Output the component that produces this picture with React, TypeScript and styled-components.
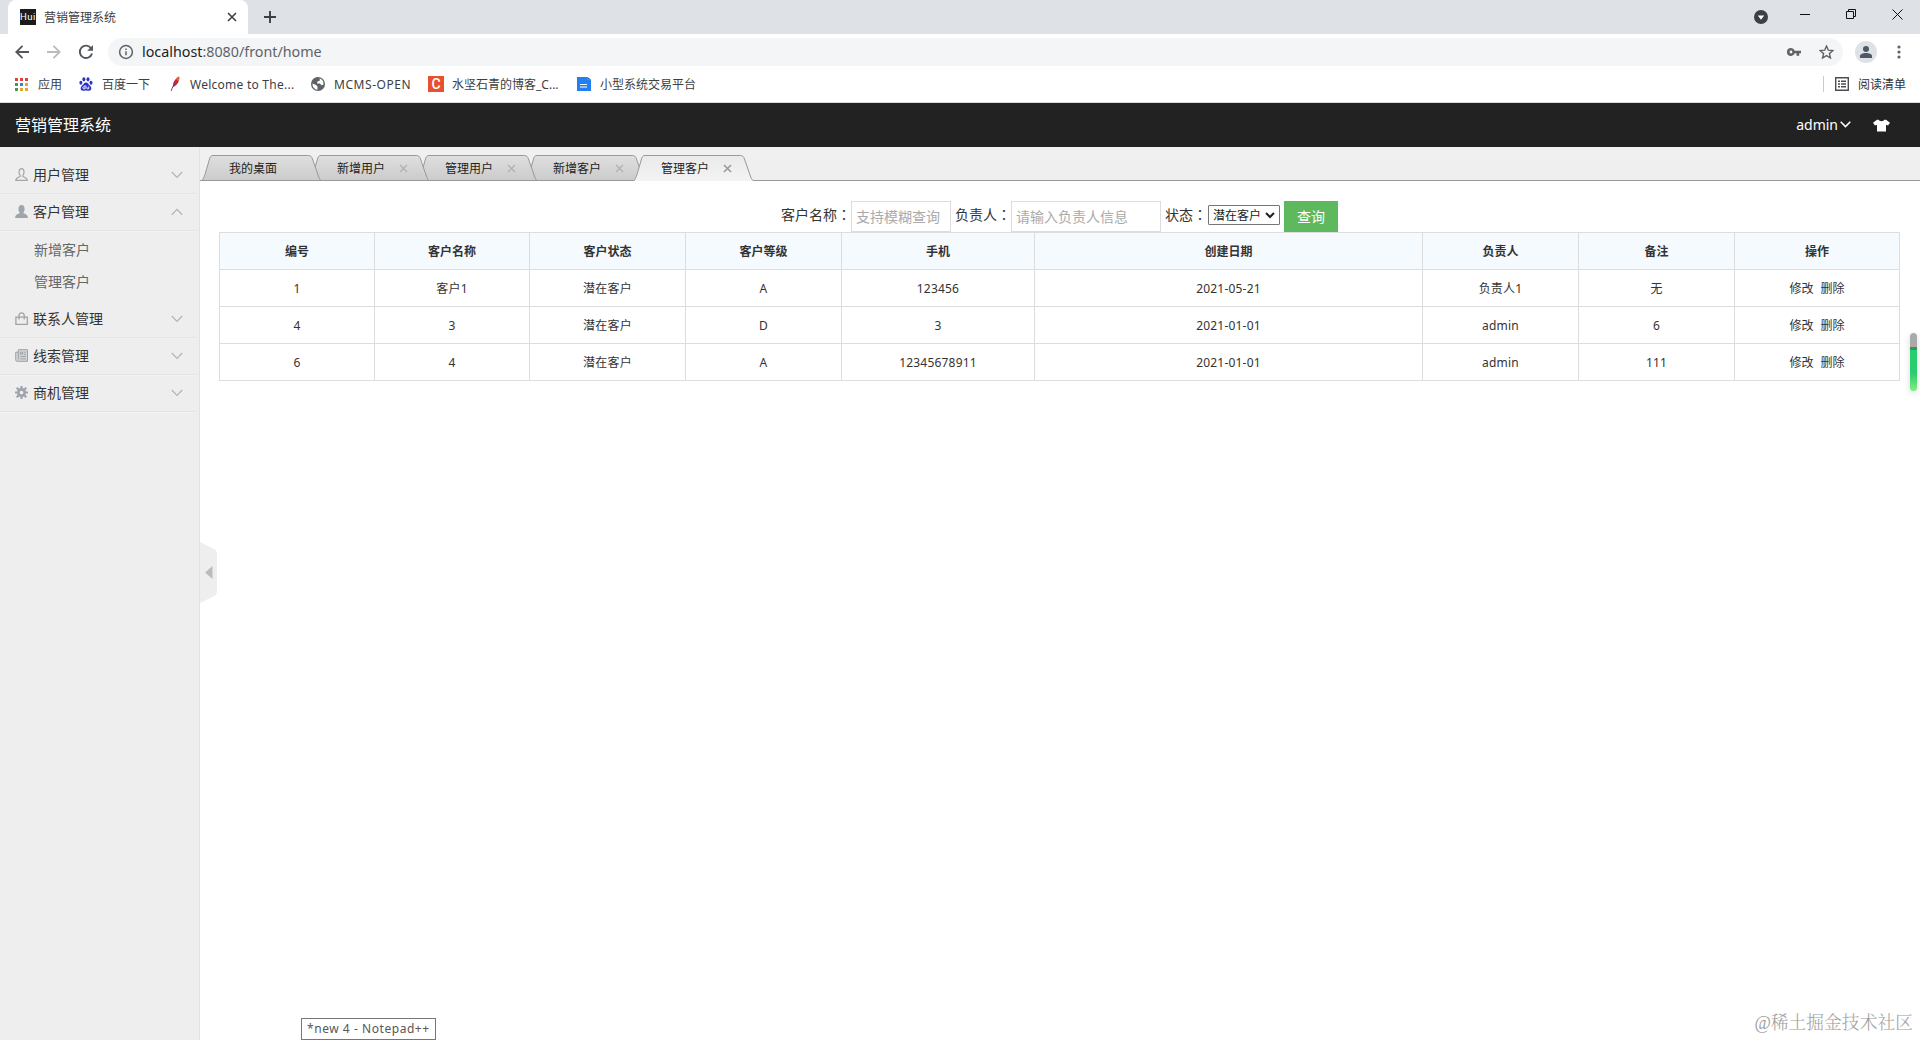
import React from "react";
import styled, { createGlobalStyle } from "styled-components";

const UI = `"Noto Sans", "Noto Sans CJK SC", sans-serif`;
const CJK = `"Noto Sans CJK SC", sans-serif`;

const GlobalStyle = createGlobalStyle`
  * { box-sizing: border-box; }
  html, body { margin: 0; padding: 0; }
  body { font-family: ${UI}; font-size: 12px; color: #333; background: #fff; overflow: hidden; }
  svg { display: block; flex: none; }
`;

const Window = styled.div`
  position: relative;
  width: 1920px;
  height: 1040px;
  display: flex;
  flex-direction: column;
  overflow: hidden;
`;

/* ---------- browser chrome ---------- */
const TabStrip = styled.div`
  height: 34px;
  background: #dee1e6;
  display: flex;
  align-items: flex-end;
  padding-left: 8px;
`;
const BrowserTab = styled.div`
  width: 240px;
  height: 34px;
  background: #fff;
  border-radius: 8px 8px 0 0;
  display: flex;
  align-items: center;
  padding: 0 11px 0 12px;
`;
const Favicon = styled.div`
  width: 16px;
  height: 16px;
  background: #1b1b1b;
  color: #fff;
  font: 9.5px/16px "Roboto", sans-serif;
  text-align: center;
  letter-spacing: 0.5px;
`;
const TabTitle = styled.div`
  flex: 1;
  margin-left: 8px;
  font: 12px/34px ${CJK};
  color: #3c4043;
`;
const NewTab = styled.div`
  height: 34px;
  width: 44px;
  display: flex;
  align-items: center;
  justify-content: center;
`;
const WindowButtons = styled.div`
  height: 34px;
  margin-left: auto;
  display: flex;
  align-items: flex-start;
  padding-right: 17px;
`;
const WindowButton = styled.div<{ $w: number; $top: number; $gap: number }>`
  width: ${(p) => p.$w}px;
  margin: ${(p) => p.$top}px ${(p) => p.$gap}px 0 0;
`;
const Toolbar = styled.div`
  height: 36px;
  display: flex;
  align-items: center;
  padding-left: 10px;
  background: #fff;
`;
const NavButton = styled.div<{ $w: number }>`
  width: ${(p) => p.$w}px;
  display: flex;
  justify-content: center;
`;
const Omnibox = styled.div`
  width: 1735px;
  height: 28px;
  border-radius: 14px;
  background: #f3f5f6;
  display: flex;
  align-items: center;
  padding: 0 9px 0 10px;
`;
const Url = styled.div`
  flex: 1;
  margin: -1px 0 0 8px;
  font: 14.3px/28px "Noto Sans", sans-serif;
  color: #5f6368;
  b { font-weight: 400; color: #202124; }
`;
const OmniIcons = styled.div`
  display: flex;
  gap: 18px;
  align-items: center;
`;
const Avatar = styled.div`
  margin-left: 12px;
  width: 22px;
  height: 22px;
  border-radius: 50%;
  background: #dee1e6;
  display: flex;
  align-items: center;
  justify-content: center;
`;
const Menu = styled.div`
  margin-left: 20px;
`;
const Bookmarks = styled.div`
  height: 33px;
  display: flex;
  align-items: flex-start;
  padding: 4px 14px 0 15px;
  border-bottom: 1px solid #dcdcdc;
`;
const Bookmark = styled.div<{ $w: number; $icon: number }>`
  width: ${(p) => p.$w}px;
  height: 20px;
  display: flex;
  align-items: center;
  white-space: nowrap;
  font-size: 12px;
  line-height: 20px;
  color: #3c4043;
  > span:first-child { width: ${(p) => p.$icon}px; display: flex; }
  > span:last-child { padding-top: 1px; }
`;
const LatinLabel = styled.span<{ $ls?: number }>`
  letter-spacing: ${(p) => p.$ls ?? 0}px;
`;
const RedC = styled.i`
  width: 16px;
  height: 16px;
  background: #e8502f;
  color: #fff;
  font: 500 14px/16px "Roboto", sans-serif;
  text-align: center;
`;
const ReadingList = styled.div`
  margin: 2px 0 0 auto;
  height: 16px;
  display: flex;
  align-items: center;
  gap: 9px;
  padding-left: 11px;
  border-left: 1px solid #c8cacd;
  color: #303236;
  line-height: 16px;
  > span { padding-top: 1px; }
`;

/* ---------- application ---------- */
const Header = styled.header`
  height: 44px;
  background: #222;
  color: #fff;
  display: flex;
  align-items: center;
  padding: 0 30px 0 15px;
`;
const Brand = styled.div`
  flex: 1;
  font: 16px/42px ${CJK};
  padding-bottom: 2px;
`;
const UserName = styled.div`
  font-size: 14px;
  line-height: 42px;
  display: flex;
  align-items: center;
  gap: 2px;
  margin-right: 22px;
  svg { margin-top: -1px; }
`;
const Body = styled.div`
  flex: 1;
  display: flex;
  min-height: 0;
`;
const Sidebar = styled.aside`
  width: 200px;
  background: #eee;
  border-right: 1px solid #e2e2e2;
  padding-top: 10px;
`;
const MenuHead = styled.div`
  height: 37px;
  width: 197px;
  display: flex;
  align-items: center;
  padding: 0 14px 1px 15px;
  border-bottom: 1px solid #e4e4e4;
  box-shadow: 0 1px 0 #f2f2f2;
  font: 14px/34px ${CJK};
  color: #333;
  > span { flex: 1; margin-left: 4px; padding-bottom: 1px; }
`;
const SubMenu = styled.div`
  padding: 3px 0;
`;
const SubItem = styled.div`
  height: 32px;
  padding-left: 34px;
  font: 14px/30px ${CJK};
  color: #666;
`;
const Main = styled.main`
  flex: 1;
  position: relative;
  background: #fff;
`;
const PageTabs = styled.div`
  height: 34px;
  background: linear-gradient(#f1f1f1, #eee);
  border-bottom: 1px solid #999;
  padding: 8px 0 0 1px;
  display: flex;
`;
const PageTab = styled.div<{ $z: number }>`
  position: relative;
  z-index: ${(p) => p.$z};
  width: 108px;
  height: 26px;
  display: flex;
  align-items: center;
  padding: 0 0 1px 28px;
  font: 12px/24px ${CJK};
  color: #222;
  > span { position: relative; width: 62px; }
`;
const TabShape = styled.svg`
  position: absolute;
  left: 0;
  top: 0;
`;
const CloseMark = styled.svg`
  position: relative;
  margin-top: 1px;
`;
const SearchForm = styled.div`
  height: 51px;
  padding: 20px 0 0 581px;
  display: flex;
  align-items: flex-start;
`;
const Label = styled.label<{ $w: number }>`
  width: ${(p) => p.$w}px;
  font: 14px/26px ${CJK};
  white-space: nowrap;
  i { font-style: normal; font-family: "Noto Sans CJK TC", sans-serif; }
`;
const TextField = styled.input<{ $w: number }>`
  width: ${(p) => p.$w}px;
  height: 31px;
  margin-right: 4px;
  padding: 0 4px 1px;
  border: 1px solid #ddd;
  outline: none;
  font: 14px ${CJK};
  &::placeholder { color: #aaa; opacity: 1; }
`;
const SelectBox = styled.div`
  width: 72px;
  height: 20px;
  margin: 4px 4px 0 0;
  padding: 0 4px;
  border: 1px solid #767676;
  border-radius: 1px;
  display: flex;
  align-items: center;
  justify-content: space-between;
  font: 12px/18px ${CJK};
  color: #222;
`;
const SearchButton = styled.button`
  width: 54px;
  height: 31px;
  border: 0;
  padding: 0;
  background: #5eb95e;
  color: #fff;
  font: 14px/29px ${CJK};
`;
const Table = styled.table`
  margin-left: 19px;
  width: 1681px;
  table-layout: fixed;
  border-spacing: 0;
  border-top: 1px solid #ddd;
  border-left: 1px solid #ddd;
  text-align: center;
`;
const Th = styled.th`
  height: 37px;
  padding: 0;
  background: #f5fafe;
  border-right: 1px solid #ddd;
  border-bottom: 1px solid #ddd;
  font: 700 12px/36px ${CJK};
`;
const Td = styled.td`
  height: 37px;
  padding: 1px 0 0;
  border-right: 1px solid #ddd;
  border-bottom: 1px solid #ddd;
  font: 12px/35px ${UI};
  letter-spacing: 0.2px;
`;
const Action = styled.a`
  letter-spacing: 0;
  & + & { margin-left: 7px; }
`;

/* ---------- overlays ---------- */
const Handle = styled.svg`
  position: absolute;
  left: 0;
  top: 395px;
`;
const Meter = styled.div`
  position: absolute;
  left: 1910px;
  top: 333px;
  width: 7px;
  height: 58px;
  border-radius: 4px;
  background: linear-gradient(#aaa 0 14px, #2a9a5c 14px 17px, #29cc6f 17px 40px, #7fee7f);
  box-shadow: 0 2px 6px rgba(0, 0, 0, 0.15);
`;
const TaskTip = styled.div`
  position: absolute;
  left: 301px;
  top: 1018px;
  width: 135px;
  height: 22px;
  border: 1px solid #767676;
  background: #fff;
  padding-left: 5px;
  font-size: 12px;
  line-height: 20px;
  letter-spacing: 0.55px;
  color: #575757;
  white-space: nowrap;
`;
const Watermark = styled.div`
  position: absolute;
  right: 7px;
  top: 1010px;
  font: 300 17.8px/26px "Liberation Serif", "Noto Serif CJK SC", "Noto Sans CJK SC", serif;
  color: #a0a0a0;
  white-space: nowrap;
`;

const Chevron = ({ up }: { up?: boolean }) => (
  <svg width="12" height="8" viewBox="0 0 12 8" fill="none" stroke="#b5b5b5" strokeWidth="1.3">
    <path d={up ? "M.8 6.8 6 1.4l5.200 5.400" : "M.8 1 6 6.400 11.200 1"} />
  </svg>
);

const UserShape = "M4 4.200C4 1.900 5 .7 6.500 .7S9 1.900 9 4.200c0 1.600-.6 2.500-1.200 3.200v1c.6.8 4.200.9 4.400 3.900H.8C1 9.300 4.600 9.200 5.200 8.400v-1C4.600 6.700 4 5.800 4 4.200z";

const icons: Record<string, React.ReactNode> = {
  user: <path d={UserShape} fill="none" stroke="#a5a5a5" strokeWidth="1.200" />,
  client: <path d={UserShape} fill="#9fa5ac" stroke="#9fa5ac" strokeWidth="1.200" />,
  bag: (
    <g fill="none" stroke="#a2a2a2" strokeWidth="1.300">
      <path d="M.9 5.100h11.400v7.200H.9zM4 7.500V3.500C4 .1 9.200 .1 9.200 3.500v4" />
    </g>
  ),
  news: (
    <g fill="none" stroke="#9ea2a6">
      <path d="M3.300 .7h9.200v11.600H2.200A1.600 1.600 0 0 1 .7 10.800V3.200h2.600z" fill="#d3d5d8" stroke="none" />
      <path d="M3.300 10.500V.7h9.200v11.600H2.200A1.500 1.500 0 0 1 .7 10.800V3.200h2.600" />
      <path d="M5.300 3.200h2.200v2H5.300zM8.700 3.200h2.300M8.700 5.400h2.300M5.300 7.600h5.700M5.300 9.900h5.700" />
    </g>
  ),
  gear: (
    <g stroke="#9ea4aa" fill="none">
      <circle cx="6.500" cy="6.500" r="3.200" strokeWidth="2.700" />
      <path d="M6.500 0v3M6.500 10v3M0 6.500h3M10 6.500h3M1.700 1.700 4 4M9 9l2.300 2.300M11.300 1.700 9 4M4 9l-2.300 2.300" strokeWidth="2.200" />
    </g>
  ),
};

const menu = [
  { icon: "user", title: "用户管理" },
  { icon: "client", title: "客户管理", items: ["新增客户", "管理客户"] },
  { icon: "bag", title: "联系人管理" },
  { icon: "news", title: "线索管理" },
  { icon: "gear", title: "商机管理" },
];
const pageTabs = ["我的桌面", "新增用户", "管理用户", "新增客户", "管理客户"];
const columnWidths = [155, 155, 156, 156, 193, 388, 156, 156, 165];
const headings = ["编号", "客户名称", "客户状态", "客户等级", "手机", "创建日期", "负责人", "备注"];
const rows = [
  ["1", "客户1", "潜在客户", "A", "123456", "2021-05-21", "负责人1", "无"],
  ["4", "3", "潜在客户", "D", "3", "2021-01-01", "admin", "6"],
  ["6", "4", "潜在客户", "A", "12345678911", "2021-01-01", "admin", "111"],
];
const appColors = ["#d9453d", "#d9453d", "#d9453d", "#3f9a55", "#3f7fd0", "#e3a72c", "#3f9a55", "#e3a72c", "#e3a72c"];

const Browser = () => (
  <>
    <TabStrip>
      <BrowserTab>
        <Favicon>Hui</Favicon>
        <TabTitle>营销管理系统</TabTitle>
        <svg width="10" height="10" stroke="#3c4043" strokeWidth="1.600"><path d="M1 1l8 8M9 1 1 9" /></svg>
      </BrowserTab>
      <NewTab>
        <svg width="12" height="12" stroke="#3c4043" strokeWidth="1.900"><path d="M6 0v12M0 6h12" /></svg>
      </NewTab>
      <WindowButtons>
        <WindowButton $w={14} $top={10} $gap={32}>
          <svg width="14" height="14"><circle cx="7" cy="7" r="7" fill="#3c4043" /><path d="M3.800 5.500h6.400L7 9.700z" fill="#fff" /></svg>
        </WindowButton>
        <WindowButton $w={10} $top={9} $gap={36}>
          <svg width="10" height="10" stroke="#111"><path d="M0 5.500h10" /></svg>
        </WindowButton>
        <WindowButton $w={10} $top={9} $gap={36}>
          <svg width="10" height="10" stroke="#111" fill="none"><path d="M.5 2.500h7v7h-7zM2.500 2.500v-2h7v7h-2" /></svg>
        </WindowButton>
        <WindowButton $w={11} $top={9} $gap={0}>
          <svg width="11" height="11" stroke="#111"><path d="M.5 .5l10 10M10.500 .5l-10 10" /></svg>
        </WindowButton>
      </WindowButtons>
    </TabStrip>
    <Toolbar>
      <NavButton $w={24}>
        <svg width="14" height="14" fill="none" stroke="#54585c" strokeWidth="1.900"><path d="M14 7H1.500M7.500 .8 1.300 7l6.200 6.200" /></svg>
      </NavButton>
      <NavButton $w={40}>
        <svg width="14" height="14" fill="none" stroke="#babcbe" strokeWidth="1.900"><path d="M0 7h12.500M6.500 .8 12.700 7l-6.200 6.200" /></svg>
      </NavButton>
      <NavButton $w={24}>
        <svg width="16" height="16" fill="none" stroke="#54585c" strokeWidth="1.900"><path d="M13.200 4.400A6.200 6.200 0 1 0 14 9.400" /><path d="M15 1v5.800H9.200z" fill="#54585c" stroke="none" /></svg>
      </NavButton>
      <NavButton $w={10} />
      <Omnibox>
        <svg width="16" height="16" fill="none" stroke="#5f6368" strokeWidth="1.500"><circle cx="8" cy="8" r="6.400" /><path d="M8 7.200v4M8 4.400v1.600" /></svg>
        <Url><b>localhost</b>:8080/front/home</Url>
        <OmniIcons>
          <svg width="14" height="10" fill="#5f6368"><path fillRule="evenodd" d="M4 1a4 4 0 1 0 3.700 5.300H9.500v2.500h2.700V6.300H14V3.700H7.700A4 4 0 0 0 4 1zm0 2.600a1.400 1.400 0 1 1 0 2.800 1.400 1.400 0 0 1 0-2.800z" /></svg>
          <svg width="15" height="14" viewBox="0 0 15 14" fill="none" stroke="#5f6368" strokeWidth="1.400"><path d="M7.500 1l1.800 4.200 4.600.4-3.500 3 1.100 4.400-4-2.400-4 2.400 1.100-4.400-3.500-3 4.600-.4z" /></svg>
        </OmniIcons>
      </Omnibox>
      <Avatar>
        <svg width="12" height="12" fill="#4f5766"><circle cx="6" cy="3" r="3" /><path d="M0 12V10c0-2 3-3 6-3s6 1 6 3v2z" /></svg>
      </Avatar>
      <Menu>
        <svg width="4" height="14" fill="#5f6368"><circle cx="2" cy="2" r="1.600" /><circle cx="2" cy="7" r="1.600" /><circle cx="2" cy="12" r="1.600" /></svg>
      </Menu>
    </Toolbar>
    <Bookmarks>
      <Bookmark $w={64} $icon={23}>
        <span><svg width="13" height="13">{appColors.map((c, i) => <rect key={i} x={(i % 3) * 5} y={Math.floor(i / 3) * 5} width="3" height="3" fill={c} />)}</svg></span>
        <span>应用</span>
      </Bookmark>
      <Bookmark $w={91} $icon={23}>
        <span>
          <svg width="14" height="14" fill="#2a32c8">
            <ellipse cx="1.900" cy="5.800" rx="1.500" ry="2" /><ellipse cx="4.900" cy="2.300" rx="1.500" ry="2.100" /><ellipse cx="9" cy="2.300" rx="1.500" ry="2.100" /><ellipse cx="12" cy="5.800" rx="1.500" ry="2" />
            <path d="M7 5.500c2 0 2.500 2 4 3.300 2.200 1.900 1.500 5-1 5-1.200 0-1.800-.3-3-.3s-1.800.3-3 .3c-2.500 0-3.200-3.100-1-5C4.500 7.500 5 5.500 7 5.500z" />
            <path d="M6.100 8v3.800H4.800a1 1 0 0 1 0-2h1.300M7.800 9.500v1.800c0 .4.200.5.600.5h1.300V9.500" fill="none" stroke="#fff" strokeWidth=".9" />
          </svg>
        </span>
        <span>百度一下</span>
      </Bookmark>
      <Bookmark $w={141} $icon={20}>
        <span>
          <svg width="10" height="16"><path d="M9 .5c1 3-1 8.500-6 10.800C2.300 7 5 2.500 9 .5z" fill="#c2253c" /><path d="M9 .5c.5 1.500.3 3.300-.4 5L6 3.200C6.800 2 7.800 1 9 .5z" fill="#e06a2c" /><path d="M6.500 5C4 8.500 2 11.500 1.200 15" stroke="#8a3a78" fill="none" /></svg>
        </span>
        <LatinLabel $ls={0.25}>Welcome to The...</LatinLabel>
      </Bookmark>
      <Bookmark $w={117} $icon={23}>
        <span>
          <svg width="14" height="14"><circle cx="7" cy="7" r="7" fill="#5f6368" /><path d="M1.500 6.500 5 8l1.500 1.500v3.300C3.500 12.500 1.300 10 1.500 6.500zM8.500 1.600 9 3.500 6.500 4.500 6 6.500h3l1.500 1.700 1.800-.5c.8-3-1-5.500-3.800-6.100z" fill="#fff" /></svg>
        </span>
        <LatinLabel $ls={0.55}>MCMS-OPEN</LatinLabel>
      </Bookmark>
      <Bookmark $w={149} $icon={24}>
        <span><RedC>C</RedC></span>
        <span>水坚石青的博客_C...</span>
      </Bookmark>
      <Bookmark $w={130} $icon={23}>
        <span>
          <svg width="14" height="14"><path d="M0 0h10.500v2.500H14V14H0z" fill="#2080f0" /><path d="M10.500 0v2.500H14z" fill="#1559c0" /><path d="M3 7.500h7M3 10h7" stroke="#fff" strokeWidth="1.200" /></svg>
        </span>
        <span>小型系统交易平台</span>
      </Bookmark>
      <ReadingList>
        <svg width="14" height="14" fill="none" stroke="#4a4d51" strokeWidth="1.400"><path d="M.7 .7h12.600v12.600H.7zM3 4.200h2M6 4.200h5M3 7h2M6 7h5M3 9.800h2M6 9.800h5" /></svg>
        <span>阅读清单</span>
      </ReadingList>
    </Bookmarks>
  </>
);

export default function App() {
  const active = pageTabs.length - 1;
  return (
    <Window>
      <GlobalStyle />
      <Browser />
      <Header>
        <Brand>营销管理系统</Brand>
        <UserName>
          admin
          <svg width="11" height="7" fill="none" stroke="#fff" strokeWidth="1.500"><path d="M.7 .8 5.500 5.600 10.300 .8" /></svg>
        </UserName>
        <svg width="17" height="13" fill="#fff"><path d="M5.500 .8C6.300 2.600 10.700 2.600 11.500 .8L13 .8 17 3.800 15 6.600 13 5.700V12.500H4V5.700L2 6.600 0 3.800 4 .8z" /></svg>
      </Header>
      <Body>
        <Sidebar>
          {menu.map((m) => (
            <React.Fragment key={m.title}>
              <MenuHead>
                <svg width="14" height="13">{icons[m.icon]}</svg>
                <span>{m.title}</span>
                <Chevron up={!!m.items} />
              </MenuHead>
              {m.items && <SubMenu>{m.items.map((s) => <SubItem key={s}>{s}</SubItem>)}</SubMenu>}
            </React.Fragment>
          ))}
        </Sidebar>
        <Main>
          <PageTabs>
            {pageTabs.map((t, i) => (
              <PageTab key={t} $z={i === active ? 10 : 6 - i}>
                <TabShape width="121" height="26">
                  <defs>
                    <linearGradient id={`tab${i}`} x1="0" y1="0" x2="0" y2="1">
                      <stop offset="0" stopColor={i === active ? "#eaeaea" : "#dfdfdf"} />
                      <stop offset="1" stopColor={i === active ? "#f3f3f3" : "#cbcbcb"} />
                    </linearGradient>
                  </defs>
                  <path d="M.5 26C2 25 3 22 4 19.500L8.500 4C9.300 1.500 10 .5 12 .5H107.500C109.500 .5 110.500 1.500 111.500 4L117 20C118 23 119 25 120.500 26" fill={`url(#tab${i})`} stroke="#999" />
                  {i !== active && <path d="M0 25.500h120" stroke="#999" />}
                </TabShape>
                <span>{t}</span>
                {i > 0 && (
                  <CloseMark width="9" height="9" stroke={i === active ? "#999" : "#b0b0b0"} strokeWidth={i === active ? 1.6 : 1.2}>
                    <path d="M1 1l7 7M8 1 1 8" />
                  </CloseMark>
                )}
              </PageTab>
            ))}
          </PageTabs>
          <SearchForm>
            <Label $w={70}>客户名称<i>：</i></Label>
            <TextField $w={100} placeholder="支持模糊查询" />
            <Label $w={56}>负责人<i>：</i></Label>
            <TextField $w={150} placeholder="请输入负责人信息" />
            <Label $w={43}>状态<i>：</i></Label>
            <SelectBox>
              潜在客户
              <svg width="10" height="7" fill="none" stroke="#222" strokeWidth="2"><path d="M1 1l4 4 4-4" /></svg>
            </SelectBox>
            <SearchButton>查询</SearchButton>
          </SearchForm>
          <Table>
            <colgroup>{columnWidths.map((w, i) => <col key={i} width={w} />)}</colgroup>
            <thead>
              <tr>{[...headings, "操作"].map((h) => <Th key={h}>{h}</Th>)}</tr>
            </thead>
            <tbody>
              {rows.map((r) => (
                <tr key={r[0]}>
                  {r.map((c, i) => <Td key={i}>{c}</Td>)}
                  <Td><Action>修改</Action><Action>删除</Action></Td>
                </tr>
              ))}
            </tbody>
          </Table>
          <Handle width="17" height="62">
            <path d="M0 0 14 7Q17 8.500 17 12V49Q17 52.500 14 54L0 61z" fill="#eee" />
            <path d="M12.500 24v13L5 30.500z" fill="#bbb" />
          </Handle>
        </Main>
      </Body>
      <Meter />
      <TaskTip>*new 4 - Notepad++</TaskTip>
      <Watermark>@稀土掘金技术社区</Watermark>
    </Window>
  );
}
